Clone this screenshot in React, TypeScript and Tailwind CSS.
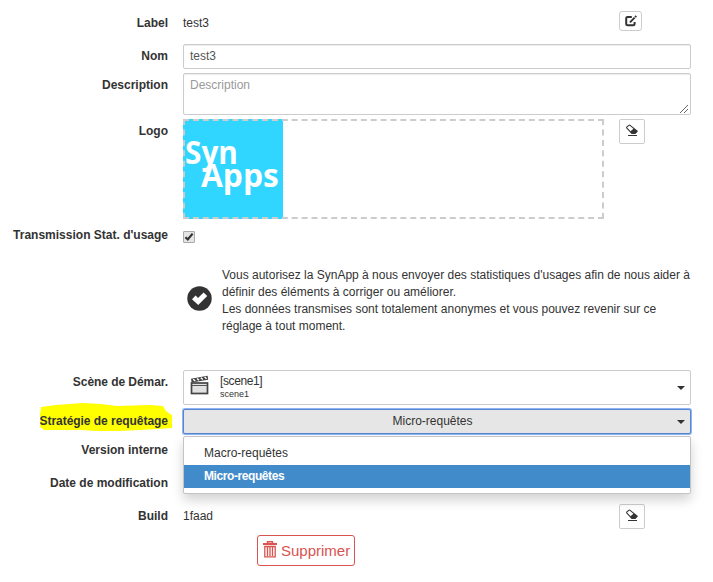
import type { ReactNode } from "react";

function Row({ label, height, spacing = "", children }: { label: string; height: string; spacing?: string; children?: ReactNode }) {
  return (
    <div className={`flex items-start ${height}`}>
      <div className={`relative mr-[15px] w-[168px] shrink-0 whitespace-nowrap pt-[4px] text-right font-bold ${spacing}`}>
        {label === "Stratégie de requêtage" && (
          <svg className="absolute left-[39px] top-[-7px] h-[32px] w-[134px]" viewBox="0 0 134 32">
            <path
              d="M1 12L2 5L17 3L44 1L62 2L78 4L111 3L124 4L127 9L131 12L133 13L133 26L119 27L100 28L80 29L57 29L43 28L5 28L1 25Z"
              fill="#ffff00"
            />
          </svg>
        )}
        <span className="relative">{label}</span>
      </div>
      {children}
    </div>
  );
}

function Caret() {
  return <span className="border-x-4 border-t-4 border-x-transparent border-t-[#333]" />;
}

function EraserButton() {
  return (
    <button className="flex h-[25px] w-[26px] items-start justify-center rounded-[2px] border border-[#ccc] bg-white">
      <svg className="mt-[4px] h-[14px] w-[14px]" viewBox="0 0 14 14">
        <path d="M1.3 2.8L3.8 .7Q4.5 .3 5.1 .8L12.6 6.8Q13 7.3 12.6 7.8L10.4 9.9H6.6L1.3 4.2Q.8 3.4 1.3 2.8Z" fill="#333" />
        <path d="M2 3.5L4.5 1.5L8.4 4.7L5.6 7.2Z" fill="#fff" />
        <path d="M3 11.5H12" stroke="#333" strokeWidth="1" />
      </svg>
    </button>
  );
}

export default function App() {
  return (
    <div className="h-[582px] w-[713px] overflow-hidden bg-white pt-[11px] font-['Liberation_Sans',Arial,sans-serif] text-[12px] leading-[17px] text-[#333]">
      <Row label="Label" height="h-[33px]">
        <span className="w-[436px] pt-[4px]">test3</span>
        <button className="flex h-[20px] w-[23px] items-center justify-center rounded-[3px] border border-[#ccc]">
          <svg className="h-[12px] w-[12px]" viewBox="0 0 12 12" fill="none" stroke="#333">
            <path d="M6.8 1.9H2.6Q1.2 1.9 1.2 3.3V8.9Q1.2 10.3 2.6 10.3H8.2Q9.6 10.3 9.6 8.9V7" strokeWidth="2" />
            <path d="M5 7.3L9.6 2.7" strokeWidth="1.9" />
            <path d="M10.1 2.2L11.3 1" strokeWidth="1.9" />
          </svg>
        </button>
      </Row>
      <Row label="Nom" height="h-[29px]">
        <input
          className="h-[25px] w-[508px] rounded-[2px] border border-[#ccc] px-[6px] pb-px text-[#555] shadow-[inset_0_1px_1px_rgba(0,0,0,0.075)] outline-none"
          defaultValue="test3"
        />
      </Row>
      <Row label="Description" height="h-[46px]">
        <div className="relative h-[42px] w-[508px]">
          <textarea
            className="block h-[42px] w-[508px] resize-none rounded-[2px] border border-[#ccc] px-[6px] py-[3px] shadow-[inset_0_1px_1px_rgba(0,0,0,0.075)] outline-none placeholder:text-[#999]"
            placeholder="Description"
          />
          <svg className="absolute bottom-[2px] right-[3px] h-[8px] w-[8px]" viewBox="0 0 8 8" stroke="#555" strokeWidth=".9">
            <path d="M0 8L8 0M4 8L8 4" />
          </svg>
        </div>
      </Row>
      <Row label="Logo" height="h-[104px]">
        <div className="relative mr-[15px] h-[100px] w-[421px]">
          <div className="h-[100px] w-[100px] bg-[#30d6ff] pt-[21px] font-['Open_Sans'] text-[32px] font-bold leading-[23px] text-white">
            <div className="ml-[2px] w-max origin-left scale-x-[.93]">Syn</div>
            <div className="ml-[18px] w-max origin-left scale-x-[.99]">Apps</div>
          </div>
          <div className="absolute inset-0 border-2 border-dashed border-[#ccc]" />
        </div>
        <EraserButton />
      </Row>
      <Row label="Transmission Stat. d'usage" height="h-[43px]">
        <div className="mt-[8px] flex h-[12px] w-[12px] items-center justify-center rounded-[1px] border border-[#aaa] bg-[#e4e4e4]">
          <svg className="h-[10px] w-[10px]" viewBox="0 0 10 10" fill="none" stroke="#333" strokeWidth="2.2">
            <path d="M1.4 5.2L3.8 7.4L8.6 1.6" />
          </svg>
        </div>
      </Row>
      <div className="flex h-[104px]">
        <svg className="ml-[187px] mr-[10px] mt-[20px] h-[25px] w-[25px]" viewBox="0 0 25 25">
          <circle cx="12.5" cy="12.5" r="12.2" fill="#333" />
          <path d="M5 13.2L8.6 9.6L11 12L16.6 6.4L20.2 10L11.2 19Z" fill="#fff" />
        </svg>
        <div className="whitespace-nowrap pt-px">
          <p>Vous autorisez la SynApp à nous envoyer des statistiques d'usages afin de nous aider à</p>
          <p>définir des éléments à corriger ou améliorer.</p>
          <p>Les données transmises sont totalement anonymes et vous pouvez revenir sur ce</p>
          <p>réglage à tout moment.</p>
        </div>
      </div>
      <Row label="Scène de Démar." height="h-[39px]" spacing="tracking-[-0.06px]">
        <button className="flex h-[35px] w-[508px] items-center rounded-[2px] border border-[#ccc] pl-[6px] pr-[5px] text-left">
          <svg className="mb-[5px] mr-[11px] h-[20px] w-[19px]" viewBox="0 0 19 20">
            <path d="M1 3.8L17.6 .7L18.2 4.7L1.6 7.5Z" fill="#444" />
            <path d="M3.2 4.3L5.2 6M7 3.5L9 5.2M10.8 2.8L12.8 4.5M14.6 2L16.6 3.7" stroke="#fff" strokeWidth="1.5" />
            <rect x="1.5" y="8" width="16" height="10.5" fill="#e1e1e1" stroke="#444" strokeWidth="1.7" />
            <path d="M2 10.5H17" stroke="#555" />
          </svg>
          <span className="flex flex-1 flex-col">
            <span className="leading-[14px] tracking-[-0.4px]">[scene1]</span>
            <span className="text-[9px] leading-[13px]">scene1</span>
          </span>
          <Caret />
        </button>
      </Row>
      <Row label="Stratégie de requêtage" height="h-[29px]" spacing="tracking-[-0.04px]">
        <div className="relative tracking-normal">
          <button className="flex h-[25px] w-[508px] items-center rounded-[2px] border border-[#5b86cf] bg-[#e6e6e6] pr-[5px] shadow-[0_0_0_1px_#8db4f5]">
            <span className="flex-1 pl-[4px] text-center">Micro-requêtes</span>
            <Caret />
          </button>
          <ul className="absolute left-0 top-[27px] z-10 h-[58px] w-[508px] rounded-[2px] border border-[#c4c4c4] bg-white pt-[5px] leading-[23px] shadow-[0_6px_12px_rgba(0,0,0,0.175)]">
            <li className="pl-[20px]">Macro-requêtes</li>
            <li className="bg-[#428bca] pl-[20px] font-bold tracking-[-0.42px] text-white">Micro-requêtes</li>
          </ul>
        </div>
      </Row>
      <Row label="Version interne" height="h-[33px]" />
      <Row label="Date de modification" height="h-[33px]" />
      <Row label="Build" height="h-[31px]">
        <span className="w-[436px] pt-[4px]">1faad</span>
        <EraserButton />
      </Row>
      <button className="ml-[257px] flex h-[31px] w-[98px] items-center rounded-[3px] border border-[#d9534f] pl-[5px] text-[15px] text-[#d9534f]">
        <svg className="mb-[3px] mr-[4px] h-[17px] w-[14px]" viewBox="0 0 14 17" fill="none" stroke="#d9534f">
          <path d="M0 3H14" strokeWidth="2" />
          <path d="M4.5 2.5V.7H9.5V2.5" strokeWidth="1.4" />
          <path d="M1.8 5.5H12.2V15.8H1.8ZM4.5 5V15M7 5V15M9.5 5V15" strokeWidth="1.3" />
        </svg>
        Supprimer
      </button>
    </div>
  );
}
